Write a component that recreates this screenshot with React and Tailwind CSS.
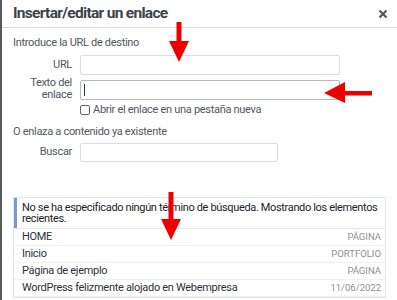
import React from 'react';

const rows = [
  { title: 'HOME', info: 'PÁGINA' },
  { title: 'Inicio', info: 'PORTFOLIO' },
  { title: 'Página de ejemplo', info: 'PÁGINA' },
  { title: 'WordPress felizmente alojado en Webempresa', info: '11/06/2022' },
];

function ArrowDown({ className, h }) {
  const shaft = h - 21;
  return (
    <svg className={className} width="20" height={h} viewBox={`0 0 20 ${h}`}>
      <rect x="7.5" y="0" width="5" height={shaft + 1} fill="#ee0000" />
      <polygon points={`0,${shaft} 20,${shaft} 10,${h}`} fill="#ee0000" />
    </svg>
  );
}

export default function App() {
  return (
    <div className="relative w-[397px] h-[300px] overflow-hidden bg-white border-l-2 border-[#5a5a5a] font-['Roboto',sans-serif] tracking-[-0.3px] text-[#3c434a]">
      <div className="flex h-[28px] items-center justify-between border-b border-[#dcdcde] pl-[11px] pr-[9px]">
        <h1 className="font-['Liberation_Sans_Narrow','Roboto',sans-serif] text-[15.5px] font-bold tracking-[-0.7px] text-[#3c434a] leading-none">Insertar/editar un enlace</h1>
        <svg width="10" height="10" viewBox="0 0 10 10" className="mt-[1px]">
          <path d="M1.5 1.5 L8.5 8.5 M8.5 1.5 L1.5 8.5" stroke="#555" strokeWidth="2.2" />
        </svg>
      </div>

      <div className="pl-[11px] pr-[11px]">
        <p className="mt-[8px] text-[11px] leading-[14px] text-[#50575e]">Introduce la URL de destino</p>

        <div className="mt-[5px] flex items-center">
          <label className="w-[60px] pr-[1px] text-right text-[11px] text-[#50575e]">URL</label>
          <div className="ml-[7px] h-[20px] w-[260px] rounded-[2px] border border-[#dcdcde] bg-white" />
        </div>

        <div className="mt-[5px] flex items-start">
          <label className="-mt-[3px] w-[60px] pr-[1px] text-right text-[11px] leading-[12px] text-[#50575e]">
            Texto del
            <br />
            enlace
          </label>
          <div className="ml-[7px] flex h-[20px] w-[260px] items-center rounded-[2px] border border-[#b4b9be] bg-white pl-[3px]">
            <span className="h-[12px] w-px bg-[#333]" />
          </div>
        </div>

        <div className="mt-[3px] flex items-center pl-[67px]">
          <span className="h-[10px] w-[10px] rounded-[2px] border border-[#666] bg-white" />
          <span className="ml-[3px] text-[11px] leading-[12px] text-[#50575e]">Abrir el enlace en una pestaña nueva</span>
        </div>

        <p className="mt-[9px] text-[11px] leading-[14px] text-[#50575e]">O enlaza a contenido ya existente</p>

        <div className="mt-[4px] flex items-center">
          <label className="w-[60px] pr-[1px] text-right text-[11px] text-[#50575e]">Buscar</label>
          <div className="ml-[7px] h-[19px] w-[198px] rounded-[2px] border border-[#dcdcde] bg-white" />
        </div>

        <div className="mt-[35px] w-[373px] border border-[#e2e4e7] bg-white">
          <div className="border-b border-[#e8e8e8]">
            <div className="border-l-[3px] border-[#7b9cc7] pb-[4px] pl-[5px] pr-[2px] pt-[5px] text-[11px] leading-[10.5px] tracking-[-0.35px] text-[#1d2327]">
              No se ha especificado ningún término de búsqueda. Mostrando los elementos recientes.
            </div>
          </div>
          {rows.map((r) => (
            <div key={r.title} className="flex h-[17px] items-center justify-between border-b border-[#f0f0f1] pl-[8px] pr-[4px]">
              <span className="text-[11px] text-[#2c3338]">{r.title}</span>
              <span className="text-[9.5px] tracking-normal uppercase text-[#8c8f94]">{r.info}</span>
            </div>
          ))}
        </div>
      </div>

      <ArrowDown className="absolute left-[167px] top-[22px]" h={40} />
      <svg className="absolute left-[322px] top-[82px]" width="48" height="21" viewBox="0 0 48 21">
        <polygon points="0,11 21,0 21,21" fill="#ee0000" />
        <rect x="20" y="9" width="28" height="4.5" fill="#ee0000" />
      </svg>
      <ArrowDown className="absolute left-[159px] top-[192px]" h={48} />
    </div>
  );
}
